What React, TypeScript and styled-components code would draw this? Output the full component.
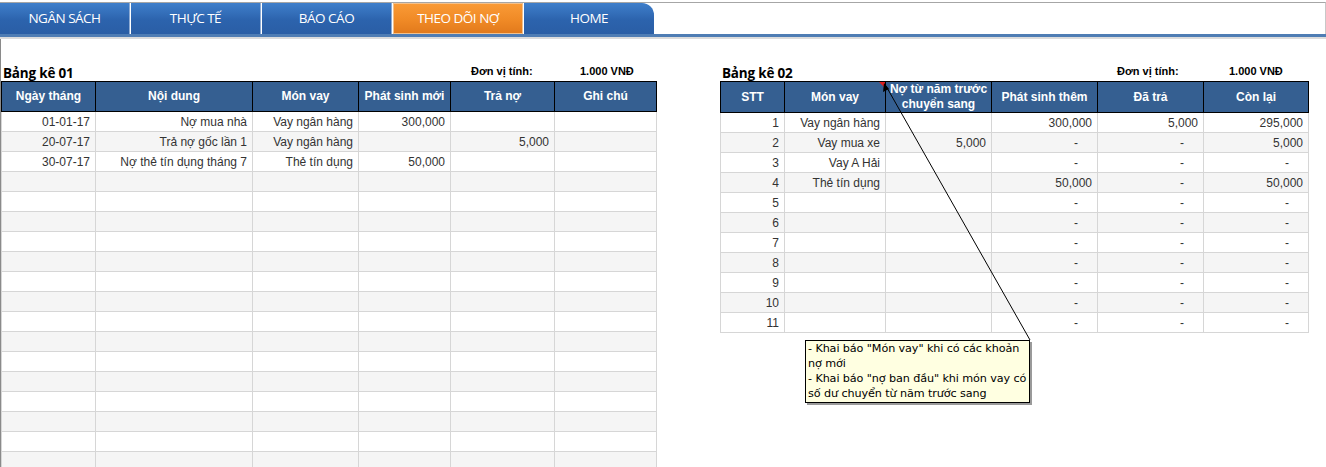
import styled, { createGlobalStyle, css } from "styled-components";

const GlobalStyle = createGlobalStyle`
  html, body {
    margin: 0;
    padding: 0;
    background: #ffffff;
    overflow: hidden;
  }
  body {
    font-family: "Liberation Sans", Arial, sans-serif;
  }
`;

const Page = styled.div`
  position: relative;
  width: 1326px;
  height: 467px;
  overflow: hidden;
  background: #fff;
`;

const TabBar = styled.div`
  display: flex;
  margin-top: 2px;
  height: 31px;
  border-top: 1px solid #a6a6a6;
  border-right: 1px solid #c8c8c8;
`;

const Tab = styled.div<{ $active?: boolean; $last?: boolean }>`
  width: 130px;
  height: 100%;
  display: flex;
  align-items: center;
  justify-content: center;
  padding-bottom: 1px;
  margin-right: 1px;
  box-sizing: border-box;
  color: #fff;
  font-family: "Open Sans", "Liberation Sans", sans-serif;
  font-size: 13.5px;
  letter-spacing: -0.5px;
  background: linear-gradient(#3f7fcb, #2c63ad 55%, #2a5ea5);
  border-right: 1px solid #8eabd3;
  ${(p) =>
    p.$active &&
    css`
      background: linear-gradient(#f99a36, #f08a26 55%, #e27a1c);
      border: 1px solid #f3c18c;
    `}
  ${(p) =>
    p.$last &&
    css`
      border-right: none;
      border-top-right-radius: 12px;
    `}
`;

const BlueRule = styled.div`
  height: 3px;
  background: #4f7db4;
  border-bottom: 2px solid #dcdcdc;
`;

const Content = styled.div`
  display: flex;
  gap: 64px;
  border-left: 1px solid #8a8a8a;
  height: 430px;
`;

const Panel = styled.div<{ $width: number }>`
  width: ${(p) => p.$width}px;
  flex-shrink: 0;
`;

const TitleRow = styled.div`
  display: flex;
  align-items: flex-end;
  height: 42px;
  padding-left: 2px;
`;

const Title = styled.div`
  font-family: "Open Sans", "Liberation Sans", sans-serif;
  font-weight: 700;
  font-size: 13.5px;
  line-height: 15px;
  letter-spacing: -0.2px;
  color: #000;
  flex: 1;
`;

const Unit = styled.div<{ $width: number }>`
  width: ${(p) => p.$width}px;
  font-size: 11px;
  font-weight: 700;
  color: #000;
  line-height: 14px;
  padding-bottom: 3px;
`;

const Table = styled.table`
  border-collapse: collapse;
  table-layout: fixed;
  font-family: "Liberation Sans", Arial, sans-serif;
  font-size: 12px;
  color: #333;
`;

const Th = styled.th`
  height: 29px;
  padding: 0 2px;
  background: #355f91;
  color: #fff;
  font-weight: 700;
  font-size: 12px;
  line-height: 15px;
  text-align: center;
  white-space: nowrap;
  border: 1px solid #000;
  position: relative;
`;

const Row = styled.tr<{ $alt: boolean }>`
  background: ${(p) => (p.$alt ? "#f5f5f5" : "#ffffff")};
`;

const Td = styled.td`
  height: 19px;
  padding: 0 5px 0 4px;
  text-align: right;
  border: 1px solid #d6d6d6;
  white-space: nowrap;
  overflow: hidden;
`;

const Dash = styled.span`
  margin-right: 14px;
`;

const CommentMark = styled.span`
  position: absolute;
  top: 0;
  right: 0;
  width: 0;
  height: 0;
  border-top: 6px solid #e02020;
  border-left: 6px solid transparent;
`;

const Arrow = styled.svg`
  position: absolute;
  left: 0;
  top: 0;
  pointer-events: none;
`;

const Note = styled.div`
  position: absolute;
  left: 805px;
  top: 340px;
  width: 225px;
  height: 63px;
  box-sizing: border-box;
  padding: 0 2px;
  background: #ffffe1;
  border: 1px solid #000;
  box-shadow: 2px 2px 0 #9a9a9a;
  font-family: "DejaVu Sans", sans-serif;
  font-size: 11.2px;
  line-height: 15px;
  letter-spacing: -0.1px;
  color: #000;
`;

const tabs = ["NGÂN SÁCH", "THỰC TẾ", "BÁO CÁO", "THEO DÕI NỢ", "HOME"];

const leftCols = [94, 157, 106, 92, 104, 102];
const leftHead = ["Ngày tháng", "Nội dung", "Món vay", "Phát sinh mới", "Trả nợ", "Ghi chú"];
const leftData: string[][] = [
  ["01-01-17", "Nợ mua nhà", "Vay ngân hàng", "300,000", "", ""],
  ["20-07-17", "Trả nợ gốc lần 1", "Vay ngân hàng", "", "5,000", ""],
  ["30-07-17", "Nợ thẻ tín dụng tháng 7", "Thẻ tín dụng", "50,000", "", ""],
];

const rightCols = [64, 101, 106, 106, 106, 105];
const rightHead = ["STT", "Món vay", "Nợ từ năm trước\nchuyển sang", "Phát sinh thêm", "Đã trả", "Còn lại"];
const rightData: string[][] = [
  ["1", "Vay ngân hàng", "", "300,000", "5,000", "295,000"],
  ["2", "Vay mua xe", "5,000", "-", "-", "5,000"],
  ["3", "Vay A Hải", "", "-", "-", "-"],
  ["4", "Thẻ tín dụng", "", "50,000", "-", "50,000"],
  ...Array.from({ length: 7 }, (_, i) => [String(i + 5), "", "", "-", "-", "-"]),
];

function Cell({ value }: { value: string }) {
  return <Td>{value === "-" ? <Dash>-</Dash> : value}</Td>;
}

function Sheet({
  cols,
  head,
  rows,
  markCol,
}: {
  cols: number[];
  head: string[];
  rows: string[][];
  markCol?: number;
}) {
  return (
    <Table style={{ width: cols.reduce((a, b) => a + b, 0) }}>
      <colgroup>
        {cols.map((w, i) => (
          <col key={i} style={{ width: w }} />
        ))}
      </colgroup>
      <thead>
        <tr>
          {head.map((h, i) => (
            <Th key={i}>
              {h.split("\n").map((line, k) => (
                <div key={k}>{line}</div>
              ))}
              {markCol === i && <CommentMark />}
            </Th>
          ))}
        </tr>
      </thead>
      <tbody>
        {rows.map((r, i) => (
          <Row key={i} $alt={i % 2 === 1}>
            {r.map((v, j) => (
              <Cell key={j} value={v} />
            ))}
          </Row>
        ))}
      </tbody>
    </Table>
  );
}

export default function App() {
  const leftRows = [
    ...leftData,
    ...Array.from({ length: 15 }, () => ["", "", "", "", "", ""]),
  ];
  return (
    <Page>
      <GlobalStyle />
      <TabBar>
        {tabs.map((t, i) => (
          <Tab key={t} $active={i === 3} $last={i === tabs.length - 1}>
            {t}
          </Tab>
        ))}
      </TabBar>
      <BlueRule />
      <Content>
        <Panel $width={655}>
          <TitleRow>
            <Title>Bảng kê 01</Title>
            <Unit $width={109}>Đơn vị tính:</Unit>
            <Unit $width={76}>1.000 VNĐ</Unit>
          </TitleRow>
          <Sheet cols={leftCols} head={leftHead} rows={leftRows} />
        </Panel>
        <Panel $width={589}>
          <TitleRow>
            <Title>Bảng kê 02</Title>
            <Unit $width={112}>Đơn vị tính:</Unit>
            <Unit $width={80}>1.000 VNĐ</Unit>
          </TitleRow>
          <Sheet cols={rightCols} head={rightHead} rows={rightData} markCol={1} />
        </Panel>
      </Content>
      <Arrow width="1326" height="467" viewBox="0 0 1326 467">
        <line x1="886" y1="86" x2="1030" y2="340" stroke="#000" strokeWidth="1" />
        <polygon points="884,83 883,92 889,89" fill="#000" />
      </Arrow>
      <Note>
        - Khai báo "Món vay" khi có các khoản nợ mới
        <br />- Khai báo "nợ ban đầu" khi món vay có số dư chuyển từ năm trước sang
      </Note>
    </Page>
  );
}
